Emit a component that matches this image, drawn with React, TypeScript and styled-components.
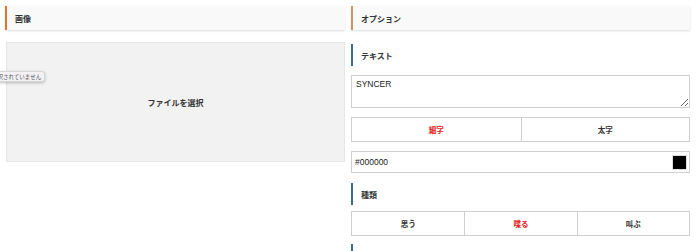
import React from "react";
import styled, { createGlobalStyle } from "styled-components";

const Global = createGlobalStyle`
  html, body { margin: 0; padding: 0; background: #fff; }
  body { font-family: "Noto Sans CJK JP", "Noto Sans", sans-serif; color: #333; overflow: hidden; }
  * { box-sizing: border-box; }
`;

const Page = styled.div`
  display: grid;
  grid-template-columns: 340px 339px;
  column-gap: 6px;
  padding: 6px 10px 0 5px;
  height: 251px;
  overflow: hidden;
`;

const Column = styled.div`
  display: flex;
  flex-direction: column;
  position: relative;
`;

const PanelHeader = styled.div<{ $accent: string }>`
  height: 24px;
  display: flex;
  align-items: center;
  padding-left: 8px;
  background: #f9f9f9;
  border-left: 2px solid ${(p) => p.$accent};
  box-shadow: 0 1px 2px rgba(0, 0, 0, 0.14);
  font-size: 8px;
  font-weight: 700;
  color: #333;
`;

const FileBox = styled.label`
  margin-top: 12px;
  margin-left: 1px;
  height: 120px;
  display: flex;
  align-items: center;
  justify-content: center;
  background: #f2f2f2;
  border: 1px solid #e6e6e6;
  font-size: 8px;
  font-weight: 700;
  color: #333;
`;

const Tooltip = styled.div`
  position: absolute;
  top: 65px;
  left: -17px;
  height: 11px;
  padding: 0 3px;
  display: flex;
  align-items: center;
  background: #f3f1f4;
  border: 1px solid #d9d6db;
  border-radius: 3px;
  box-shadow: 0 1px 3px rgba(0, 0, 0, 0.25);
  font-size: 5.5px;
  color: #555;
  white-space: nowrap;
`;

const SubHeading = styled.div<{ $mt: number }>`
  margin-top: ${(p) => p.$mt}px;
  height: 22px;
  display: flex;
  align-items: center;
  padding-left: 8px;
  border-left: 2px solid #3d6a8e;
  font-size: 8px;
  font-weight: 700;
  color: #333;
`;

const TextArea = styled.textarea`
  margin-top: 9px;
  height: 33px;
  width: 100%;
  resize: vertical;
  border: 1px solid #cfcfcf;
  padding: 3px 4px;
  font-family: "Liberation Sans", "Noto Sans", sans-serif;
  font-size: 8.5px;
  color: #222;
  outline: none;
`;

const ButtonRow = styled.div<{ $cols: number; $mt: number }>`
  margin-top: ${(p) => p.$mt}px;
  display: grid;
  grid-template-columns: repeat(${(p) => p.$cols}, 1fr);
  border: 1px solid #cfcfcf;
  height: 25px;
`;

const ToggleButton = styled.button<{ $active?: boolean }>`
  border: none;
  border-left: 1px solid #cfcfcf;
  background: #fff;
  font-family: "Noto Sans CJK JP", sans-serif;
  font-size: 7.5px;
  font-weight: 700;
  color: ${(p) => (p.$active ? "#e31a1a" : "#333")};
  padding: 0;
  &:first-child { border-left: none; }
`;

const ColorRow = styled.div`
  margin-top: 9px;
  height: 22px;
  display: flex;
  align-items: center;
  justify-content: space-between;
  border: 1px solid #cfcfcf;
  padding: 0 2px 0 3px;
  font-family: "Liberation Sans", sans-serif;
  font-size: 8.5px;
  color: #222;
`;

const Swatch = styled.span<{ $color: string }>`
  width: 15px;
  height: 15px;
  background: ${(p) => p.$color};
  border: 1px solid #ddd;
`;

export default function App() {
  return (
    <>
      <Global />
      <Page>
        <Column>
          <PanelHeader $accent="#d9782d">画像</PanelHeader>
          <FileBox>ファイルを選択</FileBox>
          <Tooltip>選択されていません</Tooltip>
        </Column>
        <Column>
          <PanelHeader $accent="#c9966a">オプション</PanelHeader>
          <SubHeading $mt={14}>テキスト</SubHeading>
          <TextArea defaultValue="SYNCER" />
          <ButtonRow $cols={2} $mt={9}>
            <ToggleButton $active>細字</ToggleButton>
            <ToggleButton>太字</ToggleButton>
          </ButtonRow>
          <ColorRow>
            #000000
            <Swatch $color="#000" />
          </ColorRow>
          <SubHeading $mt={10}>種類</SubHeading>
          <ButtonRow $cols={3} $mt={6}>
            <ToggleButton>思う</ToggleButton>
            <ToggleButton $active>喋る</ToggleButton>
            <ToggleButton>叫ぶ</ToggleButton>
          </ButtonRow>
          <SubHeading $mt={8}>&nbsp;</SubHeading>
        </Column>
      </Page>
    </>
  );
}
